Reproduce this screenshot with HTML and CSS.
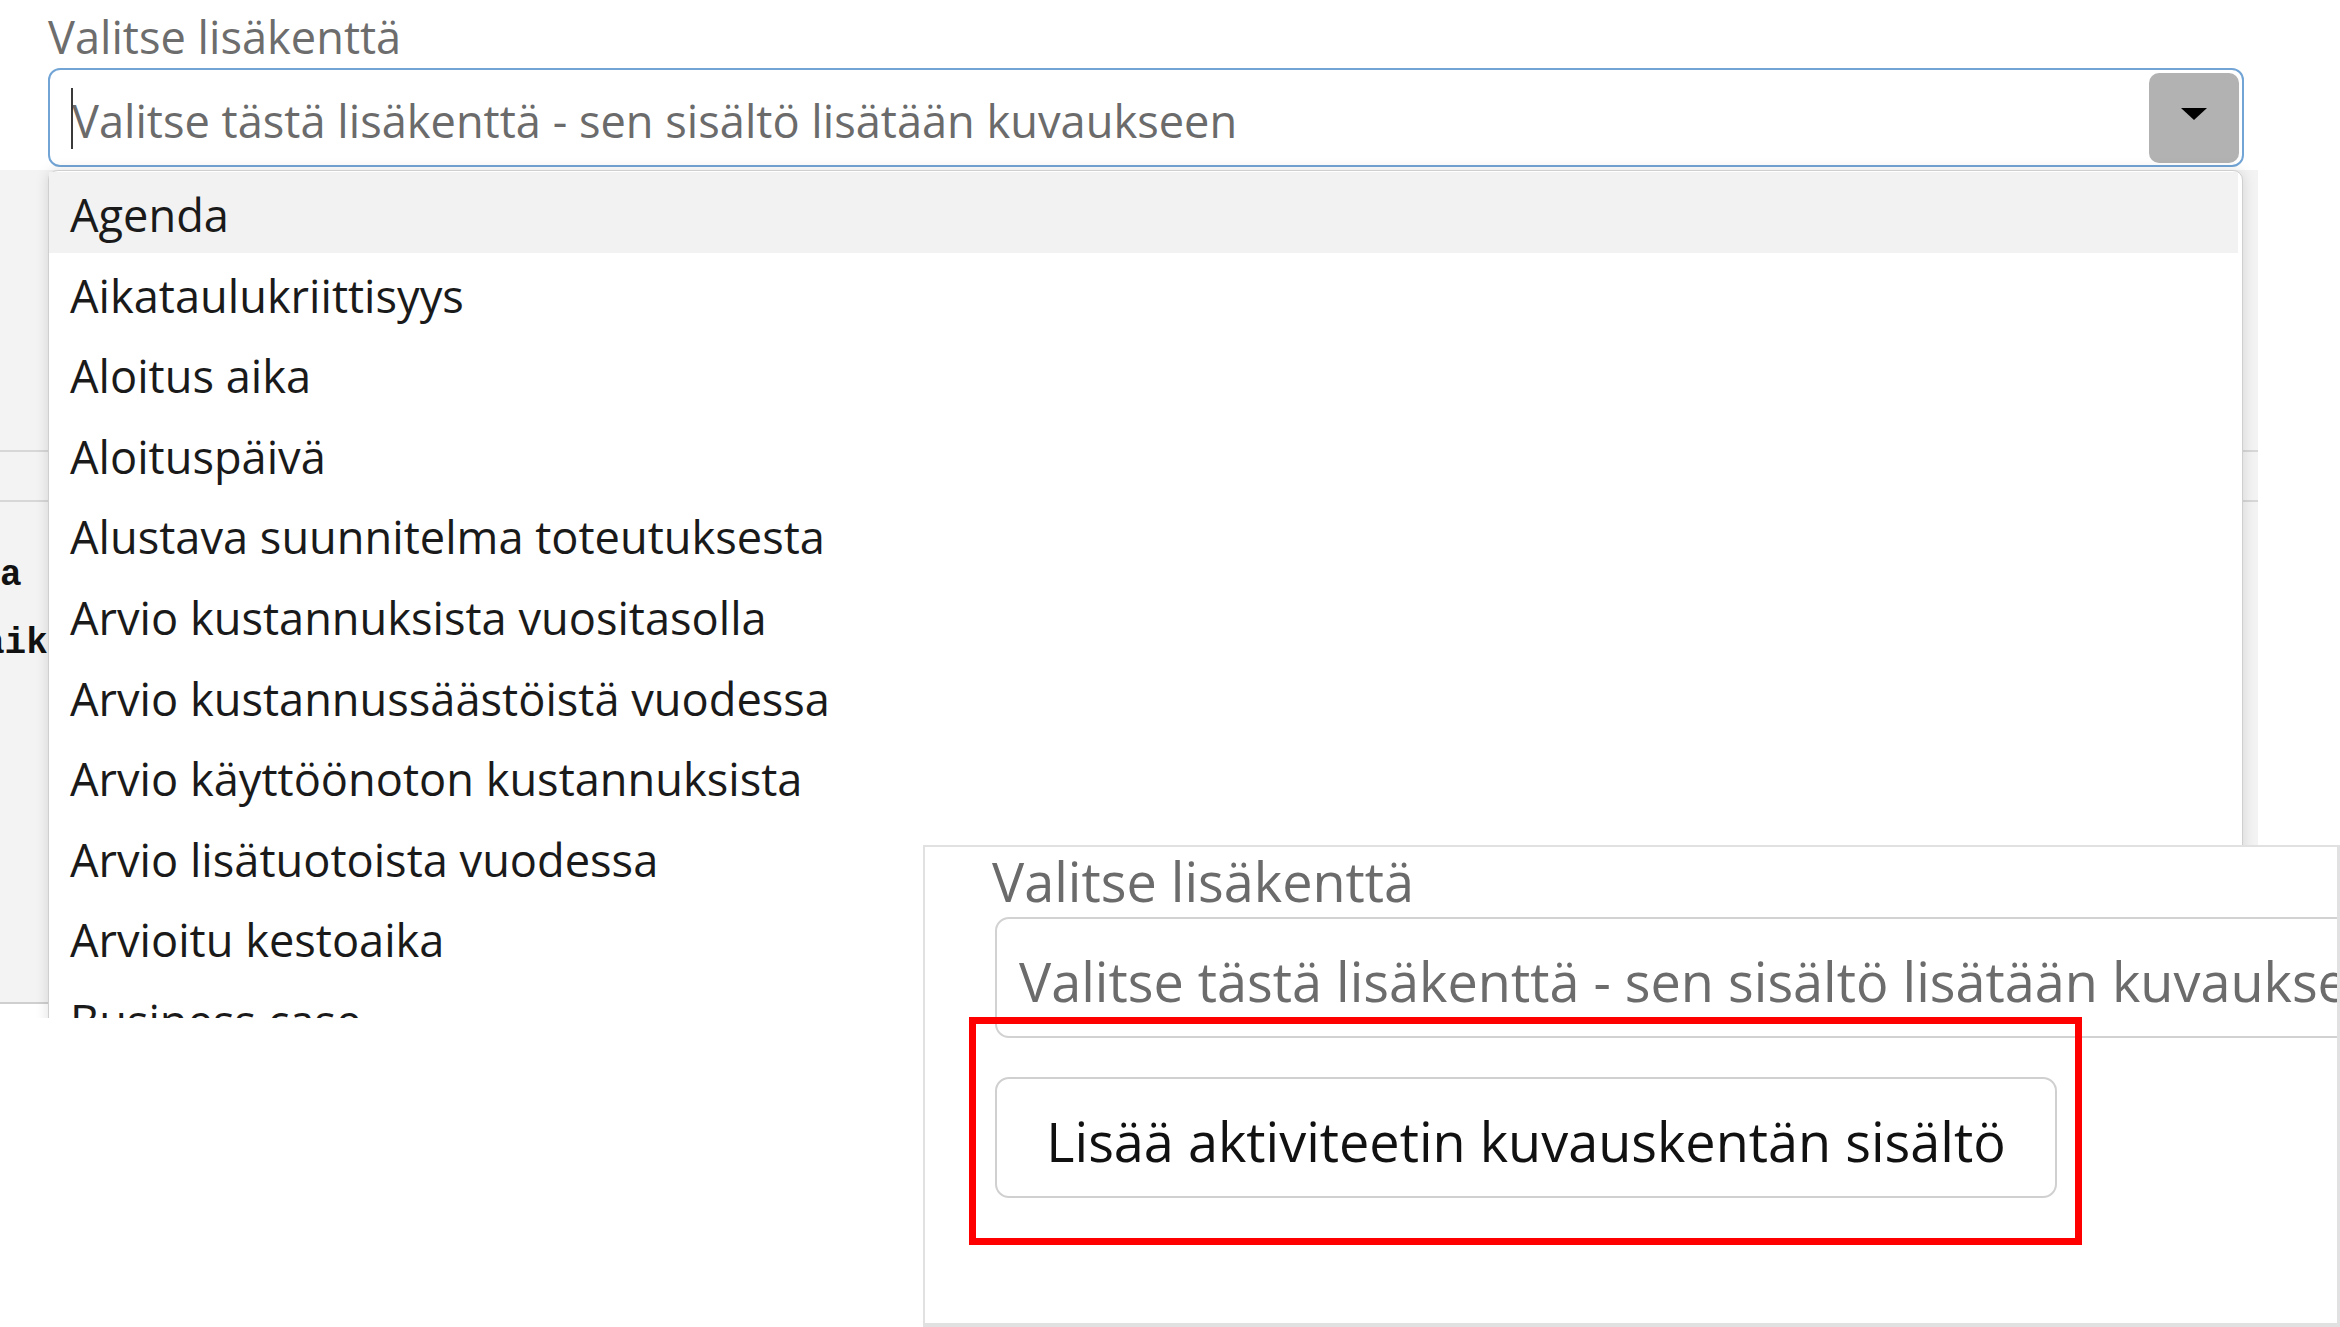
FILE: index.html
```html
<!DOCTYPE html>
<html lang="fi">
<head>
<meta charset="utf-8">
<title>Valitse lisäkenttä</title>
<link rel="stylesheet" href="styles.css">
</head>
<body>
<div class="canvas">
  <section class="shot shot-one">
    <div class="field">
      <label class="field-label">Valitse lisäkenttä</label>
      <div class="select select-focused">
        <span class="text-cursor"></span>
        <span class="placeholder">Valitse tästä lisäkenttä - sen sisältö lisätään kuvaukseen</span>
        <span class="toggle">
          <svg width="26" height="12" viewBox="0 0 26 12"><path d="M0 0H26L13 12Z" fill="#000"/></svg>
        </span>
      </div>
    </div>
    <div class="backdrop">
      <div class="bd-row bd-row-1"></div>
      <div class="bd-row bd-row-2"></div>
      <div class="bd-row bd-row-3">
        <div class="code code-1">a</div>
        <div class="code code-2">aik</div>
      </div>
    </div>
    <ul class="menu">
      <li class="menu-item active">Agenda</li>
      <li class="menu-item">Aikataulukriittisyys</li>
      <li class="menu-item">Aloitus aika</li>
      <li class="menu-item">Aloituspäivä</li>
      <li class="menu-item">Alustava suunnitelma toteutuksesta</li>
      <li class="menu-item">Arvio kustannuksista vuositasolla</li>
      <li class="menu-item">Arvio kustannussäästöistä vuodessa</li>
      <li class="menu-item">Arvio käyttöönoton kustannuksista</li>
      <li class="menu-item">Arvio lisätuotoista vuodessa</li>
      <li class="menu-item">Arvioitu kestoaika</li>
      <li class="menu-item">Business case</li>
    </ul>
  </section>

  <section class="shot shot-two">
    <label class="field-label field-label-lg">Valitse lisäkenttä</label>
    <div class="select select-lg">
      <span class="placeholder placeholder-lg">Valitse tästä lisäkenttä - sen sisältö lisätään kuvaukseen</span>
    </div>
    <button class="action" type="button">Lisää aktiviteetin kuvauskentän sisältö</button>
    <div class="highlight-box"></div>
  </section>
</div>
</body>
</html>
```

FILE: styles.css
```css
html, body {
  margin: 0;
  padding: 0;
  background: #ffffff;
}

body {
  width: 2340px;
  height: 1327px;
  overflow: hidden;
  font-family: "Open Sans", "Noto Sans", "Liberation Sans", sans-serif;
}

.canvas {
  position: relative;
  width: 2340px;
  height: 1327px;
  overflow: hidden;
  background: #ffffff;
}

/* ---------- first screenshot ---------- */
.shot-one {
  position: relative;
  width: 2258px;
  height: 1018px;
  overflow: hidden;
  background: #ffffff;
}

.field {
  padding: 0 14px 0 48px;
}

.field-label {
  display: block;
  padding-top: 6px;
  font-size: 45.2px;
  line-height: 62px;
  color: #6d6d6d;
  white-space: nowrap;
}

.select {
  position: relative;
  box-sizing: border-box;
  display: flex;
  align-items: center;
  height: 99px;
  padding: 0 3px 0 22px;
  border: 2px solid #72a5d6;
  border-radius: 12px;
  background: #ffffff;
}

.placeholder {
  flex: 1;
  align-self: flex-start;
  margin-top: 20px;
  font-size: 45.2px;
  line-height: 62px;
  color: #6b6b6b;
  white-space: nowrap;
  overflow: hidden;
}

.text-cursor {
  position: absolute;
  left: 21px;
  top: 18px;
  width: 2px;
  height: 61px;
  background: #3a3a3a;
}

.toggle {
  flex: none;
  display: flex;
  align-items: center;
  justify-content: center;
  width: 90px;
  height: 90px;
  padding-bottom: 8px;
  box-sizing: border-box;
  border-radius: 10px;
  background: #b2b2b2;
}

.backdrop {
  margin-top: 3px;
  background: #f3f3f3;
}

.bd-row {
  border-bottom: 2px solid #d7d7d7;
}

.bd-row-1 { height: 280px; }
.bd-row-2 { height: 48px; }
.bd-row-3 {
  height: 502px;
  padding-top: 40px;
  box-sizing: border-box;
  border-bottom-color: #cfcfcf;
}

.code {
  font-family: "Liberation Mono", "DejaVu Sans Mono", monospace;
  font-weight: bold;
  font-size: 36px;
  line-height: 68px;
  color: #111111;
  white-space: nowrap;
}

.code-2 { margin-left: -17px; }

.menu {
  position: absolute;
  left: 48px;
  top: 170px;
  width: 2195px;
  height: 940px;
  box-sizing: border-box;
  margin: 0;
  padding: 1px 0 0 0;
  list-style: none;
  background: #ffffff;
  border: 1px solid #cfcfcf;
  border-radius: 10px 10px 0 0;
  box-shadow: 0 0 14px rgba(0, 0, 0, 0.13);
}

.menu-item {
  box-sizing: border-box;
  height: 80.6px;
  margin-right: 4px;
  padding: 5px 0 0 21px;
  font-size: 45.2px;
  line-height: 75.6px;
  color: #1a1a1a;
  white-space: nowrap;
}

.menu-item.active {
  background: #f2f2f2;
}

/* ---------- second screenshot ---------- */
.shot-two {
  position: absolute;
  left: 923px;
  top: 845px;
  width: 1417px;
  height: 482px;
  box-sizing: border-box;
  overflow: hidden;
  background: #ffffff;
  border: 2px solid #e1e1e1;
  border-right-width: 3px;
  border-bottom-width: 4px;
}

.field-label-lg {
  padding: 0 0 0 67px;
  font-size: 54px;
  line-height: 68px;
  color: #6b6b6b;
}

.select-lg {
  width: 1400px;
  height: 121px;
  margin: 2px 0 0 70px;
  border: 2px solid #d2d2d2;
  border-radius: 14px;
}

.placeholder-lg {
  margin-top: 25px;
  font-size: 54px;
  line-height: 74px;
  color: #6c6c6c;
}

.action {
  display: flex;
  align-items: center;
  justify-content: center;
  box-sizing: border-box;
  width: 1062px;
  height: 121px;
  margin: 39px 0 0 70px;
  padding: 7px 0 0 0;
  border: 2px solid #d0d0d0;
  border-radius: 14px;
  background: #ffffff;
  font-family: "Open Sans", "Noto Sans", "Liberation Sans", sans-serif;
  font-size: 54px;
  line-height: 74px;
  color: #111111;
  white-space: nowrap;
}

.highlight-box {
  position: absolute;
  left: 44px;
  top: 170px;
  width: 1113px;
  height: 228px;
  box-sizing: border-box;
  border: 7px solid #ff0000;
}
```
